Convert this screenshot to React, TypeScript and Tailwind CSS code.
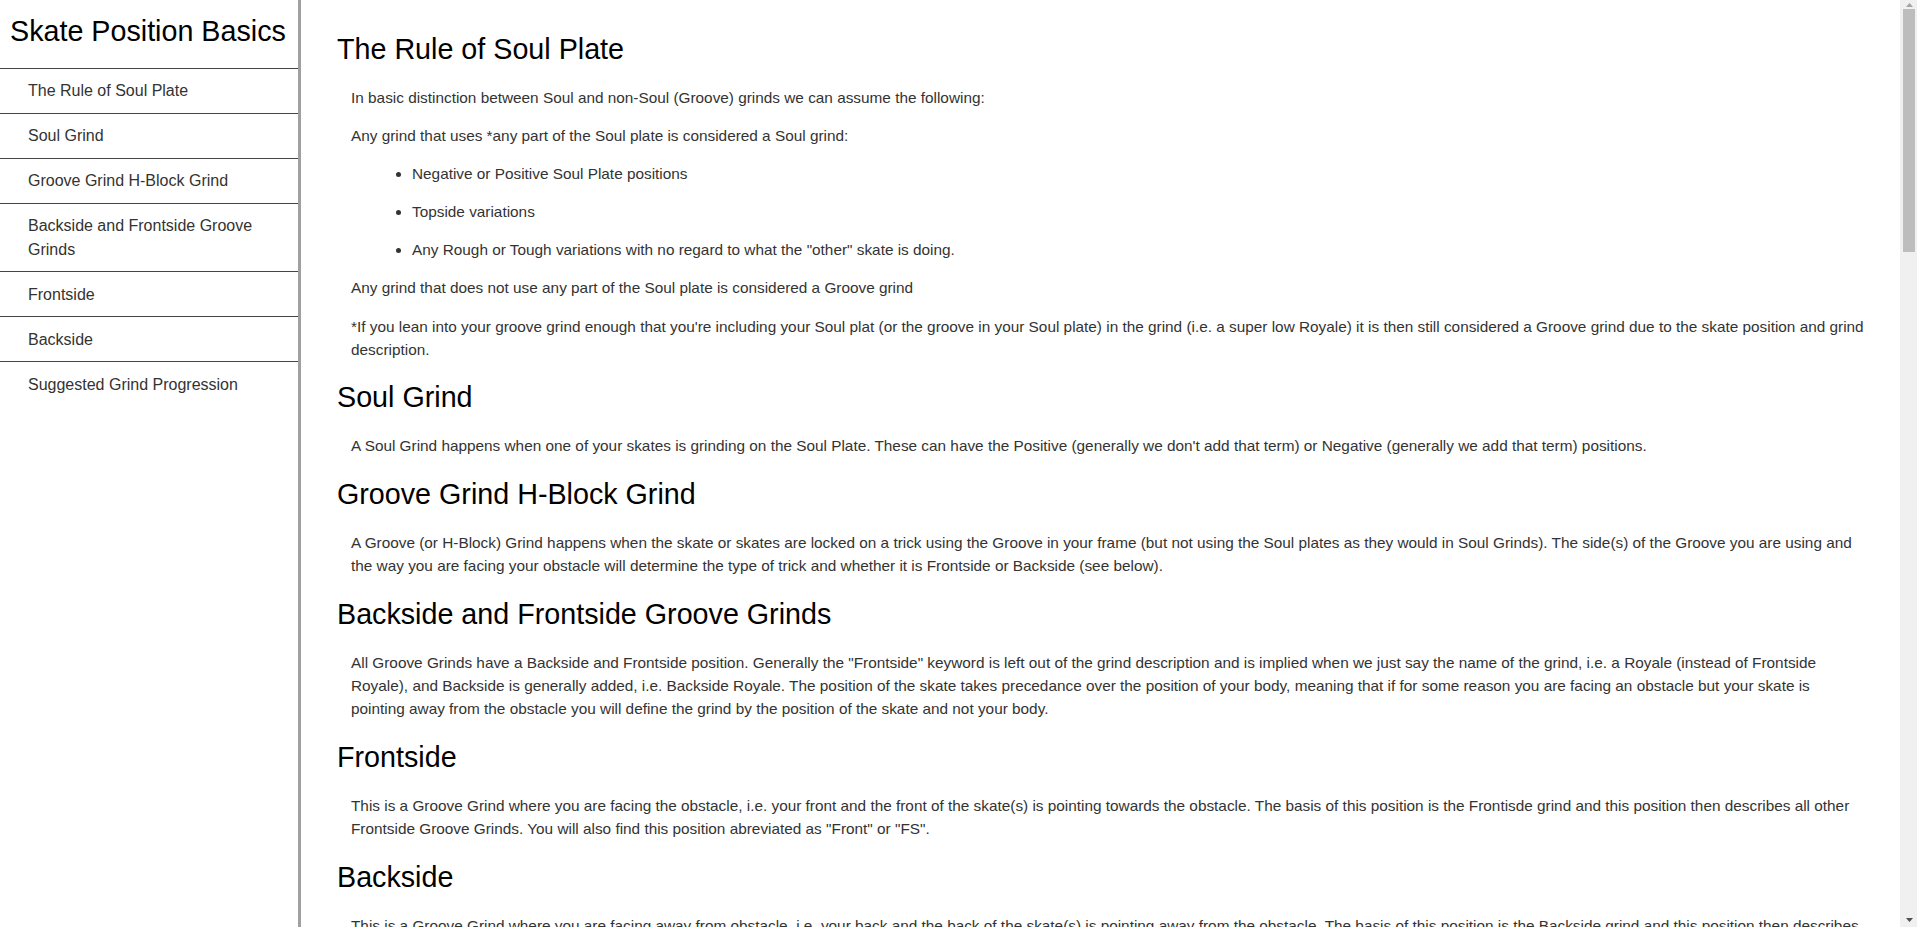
import React from 'react';

const navItems = [
  'The Rule of Soul Plate',
  'Soul Grind',
  'Groove Grind H-Block Grind',
  'Backside and Frontside Groove Grinds',
  'Frontside',
  'Backside',
  'Suggested Grind Progression',
];

const progression = [
  ['Frontside', 'Get comfortable locking the Groove on a low ledge or rail while facing it.'],
  ['Soul', 'Your first Soul Plate grind, one skate on the Soul Plate and the other rolling.'],
  ['Makio', 'A single-skate Soul grind with the other skate lifted off the obstacle.'],
  ['Backside', 'The same lock as the Frontside, but facing away from the obstacle.'],
  ['Royale', 'Front foot in a Frontside Groove, back foot turned on the Soul Plate side.'],
  ['Backside Royale', 'The Royale with the skate position turned away from the obstacle.'],
  ['Mizou', 'Front foot on the Soul Plate, back foot crossed behind in the Groove.'],
  ['Acid Soul', 'Both skates on the Soul Plates, the back foot turned to the Acid side.'],
  ['Torque Soul', 'Soul Plate on the front foot and a Backside Groove with the back foot.'],
  ['Unity', 'A Soul grind with the feet crossed, the back foot in front on the obstacle.'],
];

export default function App() {
  return (
    <div className="flex h-screen overflow-hidden bg-white font-['Liberation_Sans',Arial,sans-serif] text-[#333]">
      {/* Sidebar */}
      <aside className="w-[301px] shrink-0 border-r-[3px] border-[#a0a0a0] bg-white">
        <div className="h-[68px] pl-[10px] pt-[15px]">
          <h1 className="text-[28.7px] leading-[33px] font-normal text-black">Skate Position Basics</h1>
        </div>
        <nav>
          {navItems.map((item) => (
            <a
              key={item}
              href="#"
              className="block border-t border-[#444] py-[10.3px] pl-[28px] pr-[10px] text-[16px] leading-[23.4px] text-[#333]"
            >
              {item}
            </a>
          ))}
        </nav>
      </aside>

      {/* Main content */}
      <main className="min-w-0 flex-1 overflow-hidden pl-[36px] pr-[35px] pt-[33px]">
        <div className="flex flex-col gap-[20px] pb-[40px]">
          <Section title="The Rule of Soul Plate">
            <p>In basic distinction between Soul and non-Soul (Groove) grinds we can assume the following:</p>
            <p>Any grind that uses *any part of the Soul plate is considered a Soul grind:</p>
            <ul className="list-disc space-y-[14.7px] pl-[61px]">
              <li>Negative or Positive Soul Plate positions</li>
              <li>Topside variations</li>
              <li>Any Rough or Tough variations with no regard to what the "other" skate is doing.</li>
            </ul>
            <p>Any grind that does not use any part of the Soul plate is considered a Groove grind</p>
            <p>
              *If you lean into your groove grind enough that you're including your Soul plat (or the groove in your Soul
              plate) in the grind (i.e. a super low Royale) it is then still considered a Groove grind due to the skate
              position and grind description.
            </p>
          </Section>

          <Section title="Soul Grind">
            <p>
              A Soul Grind happens when one of your skates is grinding on the Soul Plate. These can have the Positive
              (generally we don't add that term) or Negative (generally we add that term) positions.
            </p>
          </Section>

          <Section title="Groove Grind H-Block Grind">
            <p>
              A Groove (or H-Block) Grind happens when the skate or skates are locked on a trick using the Groove in your
              frame (but not using the Soul plates as they would in Soul Grinds). The side(s) of the Groove you are using
              and the way you are facing your obstacle will determine the type of trick and whether it is Frontside or
              Backside (see below).
            </p>
          </Section>

          <Section title="Backside and Frontside Groove Grinds">
            <p>
              All Groove Grinds have a Backside and Frontside position. Generally the "Frontside" keyword is left out of
              the grind description and is implied when we just say the name of the grind, i.e. a Royale (instead of
              Frontside Royale), and Backside is generally added, i.e. Backside Royale. The position of the skate takes
              precedance over the position of your body, meaning that if for some reason you are facing an obstacle but
              your skate is pointing away from the obstacle you will define the grind by the position of the skate and not
              your body.
            </p>
          </Section>

          <Section title="Frontside">
            <p>
              This is a Groove Grind where you are facing the obstacle, i.e. your front and the front of the skate(s) is
              pointing towards the obstacle. The basis of this position is the Frontisde grind and this position then
              describes all other Frontside Groove Grinds. You will also find this position abreviated as "Front" or "FS".
            </p>
          </Section>

          <Section title="Backside">
            <p>
              This is a Groove Grind where you are facing away from obstacle, i.e. your back and the back of the skate(s)
              is pointing away from the obstacle. The basis of this position is the Backside grind and this position then
              describes all other Backside Groove Grinds. You will also find this position abreviated as "Back" or "BS".
            </p>
          </Section>

          <Section title="Suggested Grind Progression">
            <p>
              The order below is only a suggestion. Everybody learns differently, so skip ahead or go back whenever it
              feels right for you and your setup.
            </p>
            <ol className="list-decimal space-y-[14.7px] pl-[61px]">
              {progression.map(([name, text]) => (
                <li key={name}>
                  <span className="text-black">{name}</span> - {text}
                </li>
              ))}
            </ol>
          </Section>
        </div>
      </main>

      {/* Scrollbar */}
      <div className="flex w-[17px] shrink-0 flex-col bg-[#f0f0f0]">
        <div className="flex h-[9px] items-center justify-center pl-[1px]">
          <svg width="7" height="4" viewBox="0 0 7 4">
            <path d="M0 4 L3.5 0 L7 4 Z" fill="#a3a3a3" />
          </svg>
        </div>
        <div className="ml-[3px] mr-[2px] h-[243px] bg-[#bdbdbd]" />
        <div className="flex-1" />
        <div className="flex h-[14px] items-center justify-center pl-[1px]">
          <svg width="7" height="4" viewBox="0 0 7 4">
            <path d="M0 0 L7 0 L3.5 4 Z" fill="#505050" />
          </svg>
        </div>
      </div>
    </div>
  );
}

function Section({ title, children }: { title: string; children: React.ReactNode }) {
  return (
    <section>
      <h2 className="text-[28.7px] leading-[33px] font-normal text-black">{title}</h2>
      <div className="mt-[20px] space-y-[14.7px] pl-[14px] text-[15.35px] leading-[23.4px] text-[#333]">{children}</div>
    </section>
  );
}
